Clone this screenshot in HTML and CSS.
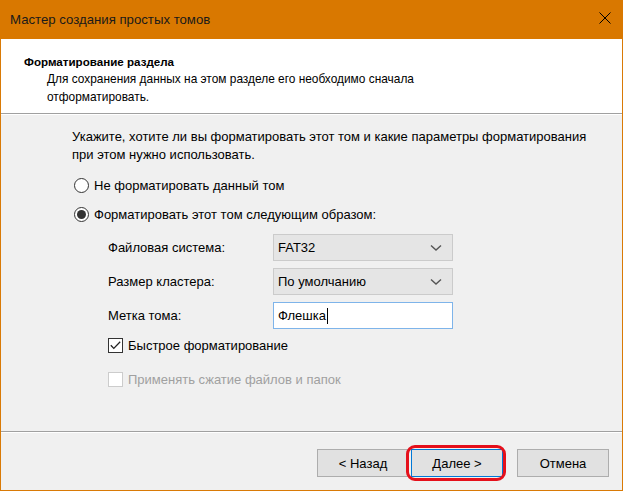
FILE: index.html
```html
<!DOCTYPE html>
<html lang="ru">
  <head>
    <meta charset="UTF-8" />
    <title>Мастер создания простых томов</title>
    <link rel="stylesheet" href="styles.css">
  </head>
  <body>
    <div class="window">
      <div class="titlebar">
        <span class="title">Мастер создания простых томов</span>
        <svg class="close" width="12" height="12" viewBox="0 0 12 12">
          <path d="M0.5 0.5 L11.5 11.5 M11.5 0.5 L0.5 11.5" stroke="#000" stroke-width="1" fill="none" />
        </svg>
      </div>

      <div class="header">
        <div class="header-title">Форматирование раздела</div>
        <div class="header-text">Для сохранения данных на этом разделе его необходимо сначала<br>отформатировать.</div>
      </div>
      <div class="separator"></div>

      <div class="content">
        <p class="intro">Укажите, хотите ли вы форматировать этот том и какие параметры форматирования<br>при этом нужно использовать.</p>

        <label class="radio-row">
          <span class="radio"></span>
          Не форматировать данный том
        </label>
        <label class="radio-row">
          <span class="radio checked"></span>
          Форматировать этот том следующим образом:
        </label>

        <div class="options">
          <div class="field">
            <span class="field-label">Файловая система:</span>
            <div class="select">
              <span>FAT32</span>
              <svg width="12" height="8" viewBox="0 0 12 8"><path d="M1 1.5 L6 6 L11 1.5" stroke="#555" stroke-width="1.4" fill="none" /></svg>
            </div>
          </div>
          <div class="field">
            <span class="field-label">Размер кластера:</span>
            <div class="select">
              <span>По умолчанию</span>
              <svg width="12" height="8" viewBox="0 0 12 8"><path d="M1 1.5 L6 6 L11 1.5" stroke="#555" stroke-width="1.4" fill="none" /></svg>
            </div>
          </div>
          <div class="field">
            <span class="field-label">Метка тома:</span>
            <div class="textbox">Флешка<span class="caret"></span></div>
          </div>

          <label class="check-row">
            <span class="check checked">
              <svg width="11" height="9" viewBox="0 0 11 9"><path d="M0.8 4.2 L3.8 7.4 L10.2 0.8" stroke="#222" stroke-width="1.3" fill="none" /></svg>
            </span>
            Быстрое форматирование
          </label>
          <label class="check-row disabled">
            <span class="check"></span>
            Применять сжатие файлов и папок
          </label>
        </div>
      </div>

      <div class="separator"></div>
      <div class="footer">
        <button class="btn">&lt; Назад</button>
        <button class="btn default">Далее &gt;</button>
        <button class="btn cancel">Отмена</button>
      </div>
    </div>
  </body>
</html>
```

FILE: styles.css
```css
* {
  box-sizing: border-box;
}
body {
  margin: 0;
  font-family: "Liberation Sans", Arial, sans-serif;
  font-size: 13px;
  color: #000;
}
.window {
  width: 623px;
  height: 491px;
  display: flex;
  flex-direction: column;
  background: #f0f0f0;
  border: 1px solid #d97a06;
  border-top: none;
}
.titlebar {
  height: 39px;
  flex-shrink: 0;
  background: #d97800;
  display: flex;
  align-items: center;
  justify-content: space-between;
  padding: 0 12px 0 10px;
  margin: 0 -1px;
}
.title {
  font-size: 13.2px;
  color: #1a1a1a;
}
.close {
  margin-top: -4px;
}
.header {
  height: 74px;
  flex-shrink: 0;
  background: #fff;
  padding: 15px 0 0 23px;
}
.header-title {
  font-weight: bold;
  font-size: 11.6px;
  line-height: 16px;
}
.header-text {
  padding-left: 23px;
  font-size: 11.9px;
  line-height: 18px;
}
.separator {
  height: 2px;
  flex-shrink: 0;
  border-top: 1px solid #a0a0a0;
  border-bottom: 1px solid #fff;
}
.content {
  flex: 1;
  padding: 13px 0 0 71px;
}
.intro {
  margin: 0 0 12px;
  line-height: 18px;
}
.radio-row {
  display: flex;
  align-items: center;
  height: 18px;
  margin-bottom: 11px;
  margin-left: 2px;
}
.radio {
  width: 15px;
  height: 15px;
  border: 1px solid #333;
  border-radius: 50%;
  background: #fff;
  margin-right: 5px;
  display: flex;
  align-items: center;
  justify-content: center;
}
.radio.checked::after {
  content: "";
  width: 9px;
  height: 9px;
  border-radius: 50%;
  background: #333;
}
.options {
  padding-left: 36px;
  margin-top: 3px;
}
.field {
  display: flex;
  align-items: center;
  margin-bottom: 7px;
}
.field-label {
  width: 165px;
}
.select {
  width: 180px;
  height: 27px;
  background: #e5e5e5;
  border: 1px solid #cbcbcb;
  display: flex;
  align-items: center;
  justify-content: space-between;
  padding: 0 10px 0 4px;
}
.textbox {
  width: 180px;
  height: 27px;
  background: #fff;
  border: 1px solid #7eb4ea;
  display: flex;
  align-items: center;
  padding: 0 4px;
}
.caret {
  width: 1px;
  height: 16px;
  background: #000;
  margin-left: 1px;
}
.check-row {
  display: flex;
  align-items: center;
  height: 18px;
  margin-top: 7px;
}
.check-row + .check-row {
  margin-top: 16px;
}
.check {
  width: 15px;
  height: 15px;
  border: 1px solid #333;
  background: #fff;
  margin-right: 5px;
  display: flex;
  align-items: center;
  justify-content: center;
}
.check-row.disabled {
  color: #a0a0a0;
}
.check-row.disabled .check {
  border-color: #cccccc;
}
.footer {
  height: 57px;
  flex-shrink: 0;
  display: flex;
  align-items: flex-start;
  justify-content: flex-end;
  padding: 16px 13px 0 0;
}
.btn {
  width: 92px;
  height: 28px;
  font-family: inherit;
  font-size: 13px;
  background: #e1e1e1;
  border: 1px solid #adadad;
  padding: 0;
  color: #000;
}
.btn.default {
  margin-left: 2px;
  border-color: #0078d7;
  position: relative;
}
.btn.default::after {
  content: "";
  position: absolute;
  left: -6px;
  top: -5px;
  right: -4px;
  bottom: -5px;
  border: 3px solid #e5101b;
  border-radius: 9px;
}
.btn.cancel {
  margin-left: 14px;
}
```
